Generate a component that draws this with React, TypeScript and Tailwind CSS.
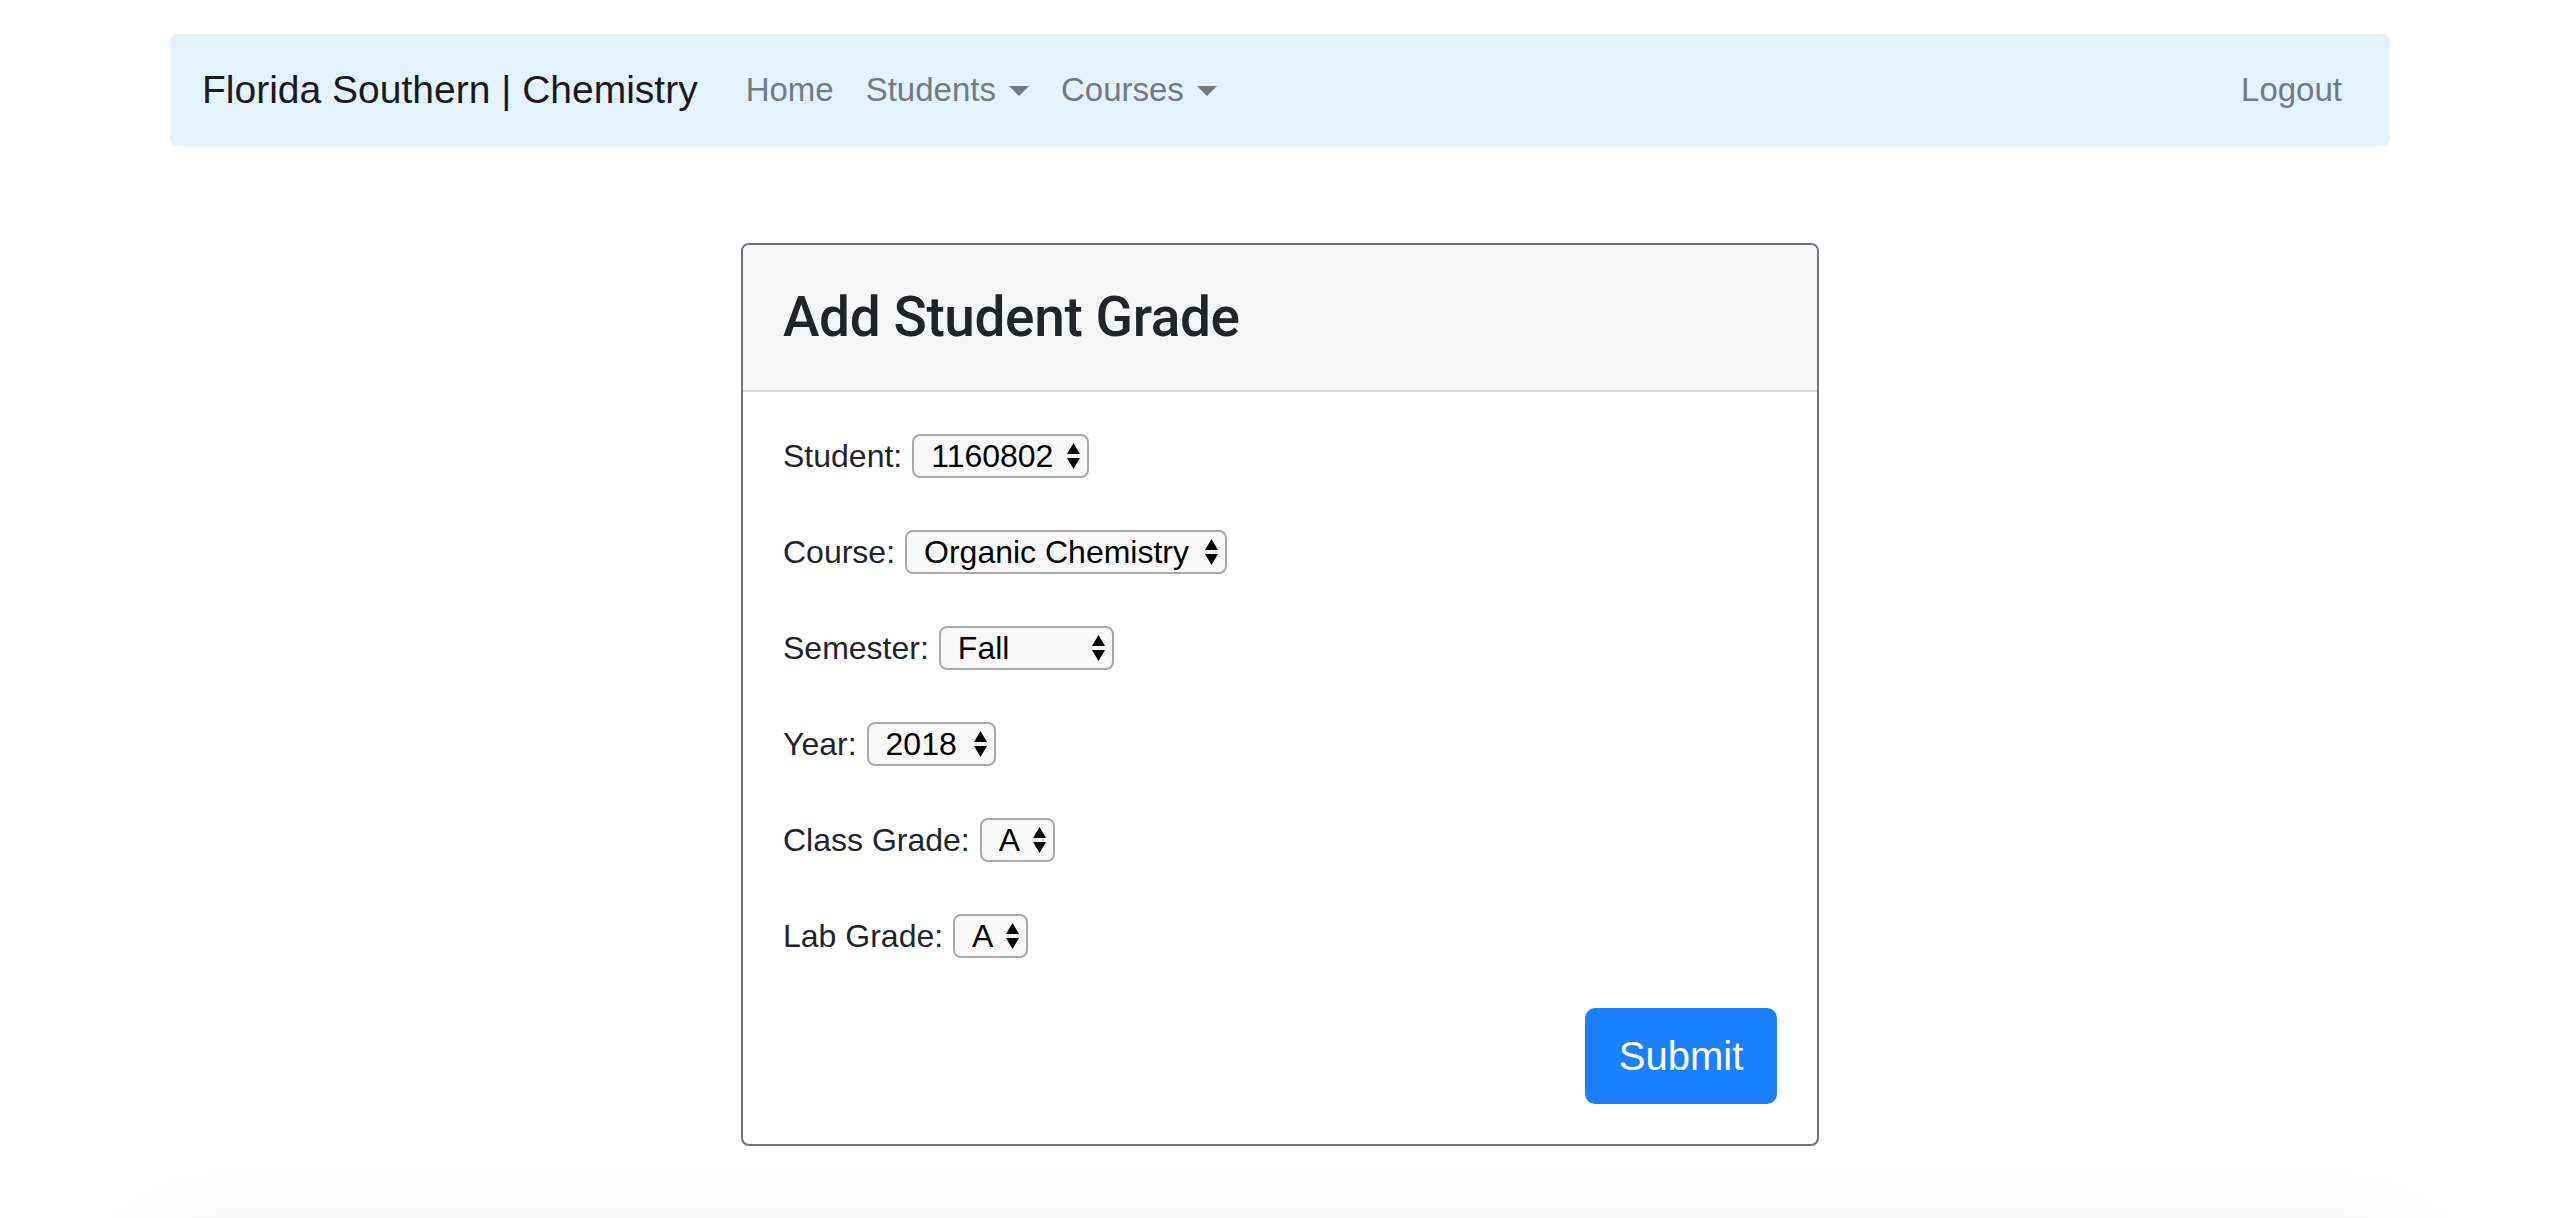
import { useState } from 'react';

const font = { fontFamily: '"Liberation Sans", Arial, sans-serif' };

function Caret() {
  return <span className="ml-[13px] inline-block align-middle border-x-[10.5px] border-x-transparent border-t-[10px] border-t-[#737a80] translate-y-[-2px]" />;
}

function Arrows() {
  return (
    <svg width="13" height="26" viewBox="0 0 13 26" className="pointer-events-none absolute right-[9px] top-1/2 -translate-y-1/2">
      <polygon points="0,11 6.5,0 13,11" fill="#000" />
      <polygon points="0,15 13,15 6.5,26" fill="#000" />
    </svg>
  );
}

function Field({ label, width, value, options, onChange }: { label: string; width: string; value: string; options: string[]; onChange: (v: string) => void }) {
  return (
    <div className="flex h-12 items-center gap-[10px]">
      <label className="text-[32px] text-[#212529]">{label}</label>
      <div className={`relative ${width}`}>
        <select
          value={value}
          onChange={e => onChange(e.target.value)}
          style={font}
          className="h-[44px] w-full appearance-none rounded-[8px] border-2 border-[#a9a9a9] bg-[#f8f8f8] pl-[17px] pr-[30px] text-[32px] leading-[40px] text-black outline-none"
        >
          {options.map(o => (
            <option key={o} value={o}>{o}</option>
          ))}
        </select>
        <Arrows />
      </div>
    </div>
  );
}

export default function App() {
  const [student, setStudent] = useState('1160802');
  const [course, setCourse] = useState('Organic Chemistry');
  const [semester, setSemester] = useState('Fall');
  const [year, setYear] = useState('2018');
  const [classGrade, setClassGrade] = useState('A');
  const [labGrade, setLabGrade] = useState('A');

  const grades = ['A', 'B', 'C', 'D', 'F'];

  return (
    <div className="h-[1218px] overflow-hidden bg-white" style={font}>
      <div className="mx-auto w-[2220px]">
        {/* Navbar */}
        <nav className="mt-[34px] flex h-[112px] items-center rounded-lg bg-[#e3f2fd] px-8">
          <a className="mr-8 text-[39px] leading-[60px] text-[#1a1a1a]">Florida Southern | Chemistry</a>
          <a className="px-4 text-[33px] text-[#737a80]">Home</a>
          <a className="px-4 text-[33px] text-[#737a80]">Students<Caret /></a>
          <a className="px-4 text-[33px] text-[#737a80]">Courses<Caret /></a>
          <a className="ml-auto px-4 text-[33px] text-[#737a80]">Logout</a>
        </nav>

        {/* Card */}
        <div className="mx-auto mt-[97px] w-[1078px] overflow-hidden rounded-lg border-2 border-[#6c757d] bg-white">
          <div className="flex h-[147px] items-center border-b-2 border-[#dcdcdc] bg-[#f6f6f6] px-10">
            <h3 className="text-[55px] font-medium tracking-[-0.4px] text-[#212529]" style={{ fontFamily: 'Roboto, "Liberation Sans", sans-serif' }}>Add Student Grade</h3>
          </div>
          <form className="flex flex-col p-10" onSubmit={e => e.preventDefault()}>
            <div className="flex flex-col gap-12">
              <Field label="Student:" width="w-[177px]" value={student} options={['1160802', '1160803', '1160804']} onChange={setStudent} />
              <Field label="Course:" width="w-[322px]" value={course} options={['Organic Chemistry', 'General Chemistry', 'Biochemistry']} onChange={setCourse} />
              <Field label="Semester:" width="w-[175px]" value={semester} options={['Fall', 'Spring', 'Summer']} onChange={setSemester} />
              <Field label="Year:" width="w-[129px]" value={year} options={['2018', '2019', '2020']} onChange={setYear} />
              <Field label="Class Grade:" width="w-[75px]" value={classGrade} options={grades} onChange={setClassGrade} />
              <Field label="Lab Grade:" width="w-[75px]" value={labGrade} options={grades} onChange={setLabGrade} />
            </div>
            <button type="submit" className="mt-12 h-[96px] w-[192px] self-end rounded-[10px] bg-[#1a80fb] text-[40px] text-white">
              Submit
            </button>
          </form>
        </div>

        {/* Footer below the fold, only its shadow shows */}
        <div className="mt-[86px] h-[200px] rounded-lg bg-white shadow-[0_32px_96px_rgba(0,0,0,0.175)]" />
      </div>
    </div>
  );
}
